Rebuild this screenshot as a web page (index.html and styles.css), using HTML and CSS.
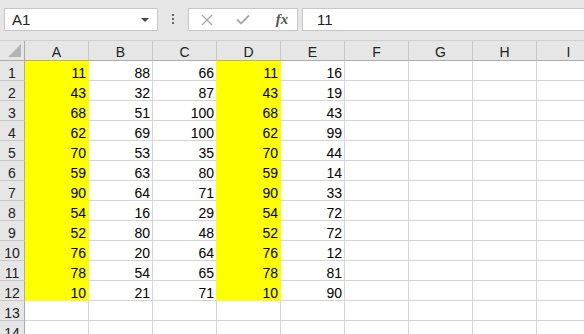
FILE: index.html
```html
<!DOCTYPE html>
<html lang="en">
<head>
    <meta charset="UTF-8">
    <title>Book1 - Excel</title>
    <link rel="stylesheet" href="styles.css">
</head>
<body>
    <div class="formula-bar">
        <div class="name-box">
            <span>A1</span>
            <span class="caret"></span>
        </div>
        <div class="grip"><i></i><i></i><i></i></div>
        <div class="fx-buttons">
            <span class="fx-btn">
                <svg width="12" height="12" viewBox="0 0 12 12"><path d="M1 1L11 11M11 1L1 11" stroke="#a8a8a8" stroke-width="1.4" fill="none"/></svg>
            </span>
            <span class="fx-btn">
                <svg width="14" height="11" viewBox="0 0 14 11"><path d="M1 5.5L5 9.5L13 1.5" stroke="#a8a8a8" stroke-width="1.8" fill="none"/></svg>
            </span>
            <span class="fx-btn fx-label">fx</span>
        </div>
        <div class="formula-input">11</div>
    </div>

    <div class="sheet">
        <div class="corner"><svg width="14" height="14" viewBox="0 0 14 14"><polygon points="13,0 13,13 0,13" fill="#b4b4b4"/></svg></div>
        <div class="hd">A</div><div class="hd">B</div><div class="hd">C</div><div class="hd">D</div><div class="hd">E</div><div class="hd">F</div><div class="hd">G</div><div class="hd">H</div><div class="hd">I</div>

        <div class="rh">1</div><div class="cell y">11</div><div class="cell">88</div><div class="cell c">66</div><div class="cell y">11</div><div class="cell">16</div><div class="cell"></div><div class="cell"></div><div class="cell"></div><div class="cell"></div>
        <div class="rh">2</div><div class="cell y">43</div><div class="cell">32</div><div class="cell c">87</div><div class="cell y">43</div><div class="cell">19</div><div class="cell"></div><div class="cell"></div><div class="cell"></div><div class="cell"></div>
        <div class="rh">3</div><div class="cell y">68</div><div class="cell">51</div><div class="cell c">100</div><div class="cell y">68</div><div class="cell">43</div><div class="cell"></div><div class="cell"></div><div class="cell"></div><div class="cell"></div>
        <div class="rh">4</div><div class="cell y">62</div><div class="cell">69</div><div class="cell c">100</div><div class="cell y">62</div><div class="cell">99</div><div class="cell"></div><div class="cell"></div><div class="cell"></div><div class="cell"></div>
        <div class="rh">5</div><div class="cell y">70</div><div class="cell">53</div><div class="cell c">35</div><div class="cell y">70</div><div class="cell">44</div><div class="cell"></div><div class="cell"></div><div class="cell"></div><div class="cell"></div>
        <div class="rh">6</div><div class="cell y">59</div><div class="cell">63</div><div class="cell c">80</div><div class="cell y">59</div><div class="cell">14</div><div class="cell"></div><div class="cell"></div><div class="cell"></div><div class="cell"></div>
        <div class="rh">7</div><div class="cell y">90</div><div class="cell">64</div><div class="cell c">71</div><div class="cell y">90</div><div class="cell">33</div><div class="cell"></div><div class="cell"></div><div class="cell"></div><div class="cell"></div>
        <div class="rh">8</div><div class="cell y">54</div><div class="cell">16</div><div class="cell c">29</div><div class="cell y">54</div><div class="cell">72</div><div class="cell"></div><div class="cell"></div><div class="cell"></div><div class="cell"></div>
        <div class="rh">9</div><div class="cell y">52</div><div class="cell">80</div><div class="cell c">48</div><div class="cell y">52</div><div class="cell">72</div><div class="cell"></div><div class="cell"></div><div class="cell"></div><div class="cell"></div>
        <div class="rh">10</div><div class="cell y">76</div><div class="cell">20</div><div class="cell c">64</div><div class="cell y">76</div><div class="cell">12</div><div class="cell"></div><div class="cell"></div><div class="cell"></div><div class="cell"></div>
        <div class="rh">11</div><div class="cell y">78</div><div class="cell">54</div><div class="cell c">65</div><div class="cell y">78</div><div class="cell">81</div><div class="cell"></div><div class="cell"></div><div class="cell"></div><div class="cell"></div>
        <div class="rh">12</div><div class="cell y">10</div><div class="cell">21</div><div class="cell c">71</div><div class="cell y">10</div><div class="cell">90</div><div class="cell"></div><div class="cell"></div><div class="cell"></div><div class="cell"></div>
        <div class="rh">13</div><div class="cell"></div><div class="cell"></div><div class="cell"></div><div class="cell"></div><div class="cell"></div><div class="cell"></div><div class="cell"></div><div class="cell"></div><div class="cell"></div>
        <div class="rh">14</div><div class="cell"></div><div class="cell"></div><div class="cell"></div><div class="cell"></div><div class="cell"></div><div class="cell"></div><div class="cell"></div><div class="cell"></div><div class="cell"></div>
    </div>
</body>
</html>
```

FILE: styles.css
```css
body {
    margin: 0;
    overflow: hidden;
    background-color: #ffffff;
    font-family: "Liberation Sans", Arial, sans-serif;
    font-size: 14px;
    color: #000000;
}

/* formula bar */
.formula-bar {
    display: flex;
    align-items: flex-start;
    height: 40px;
    padding-top: 8px;
    box-sizing: border-box;
    background-color: #e6e6e6;
}
.name-box {
    display: flex;
    align-items: center;
    justify-content: space-between;
    width: 154px;
    height: 23px;
    margin-left: 4px;
    padding: 0 8px 0 7px;
    box-sizing: border-box;
    background-color: #ffffff;
    border: 1px solid #c6c6c6;
    color: #222222;
    font-size: 15px;
}
.caret {
    width: 0;
    height: 0;
    border-left: 4px solid transparent;
    border-right: 4px solid transparent;
    border-top: 4px solid #444444;
}
.grip {
    display: flex;
    flex-direction: column;
    align-items: center;
    gap: 2px;
    width: 30px;
    padding-top: 6px;
}
.grip i {
    display: block;
    width: 2px;
    height: 2px;
    background-color: #666666;
}
.fx-buttons {
    display: flex;
    align-items: center;
    width: 110px;
    height: 23px;
    box-sizing: border-box;
    background-color: #ffffff;
    border: 1px solid #c6c6c6;
}
.fx-btn {
    display: flex;
    align-items: center;
    justify-content: center;
    width: 36px;
    height: 21px;
}
.fx-label {
    padding-left: 6px;
    box-sizing: border-box;
    font-family: "Liberation Serif", "Times New Roman", serif;
    font-style: italic;
    font-weight: bold;
    font-size: 15px;
    color: #555555;
}
.formula-input {
    flex: 1;
    height: 23px;
    margin-left: 4px;
    margin-right: -10px;
    padding-left: 14px;
    box-sizing: border-box;
    line-height: 21px;
    background-color: #ffffff;
    border: 1px solid #c6c6c6;
    font-size: 15px;
    color: #222222;
}

/* grid */
.sheet {
    display: grid;
    grid-template-columns: 25px repeat(9, 64px);
    grid-auto-rows: 20px;
    border-top: 1px solid #d0d0d0;
    background-color: #ffffff;
}
.sheet > div {
    box-sizing: border-box;
    overflow: hidden;
    white-space: nowrap;
}
.corner {
    display: flex;
    align-items: flex-end;
    justify-content: flex-end;
    padding: 0 2px 2px 0;
    background-color: #e6e6e6;
    border-right: 1px solid #ababab;
    border-bottom: 1px solid #ababab;
}
.hd {
    padding-top: 3px;
    line-height: 16px;
    text-align: center;
    background-color: #e6e6e6;
    border-right: 1px solid #c8c8c8;
    border-bottom: 1px solid #ababab;
    color: #222222;
}
.rh {
    padding-top: 4px;
    line-height: 16px;
    text-align: center;
    background-color: #e6e6e6;
    border-right: 1px solid #ababab;
    border-bottom: 1px solid #c8c8c8;
    color: #222222;
}
.cell {
    padding: 4px 2px 0 0;
    line-height: 16px;
    text-align: right;
    border-right: 1px solid #d4d4d4;
    border-bottom: 1px solid #d4d4d4;
}
.cell.y {
    background-color: #ffff00;
    border-color: #ffff00;
}
.cell.c {
    border-right-color: #ffff00;
}
```
